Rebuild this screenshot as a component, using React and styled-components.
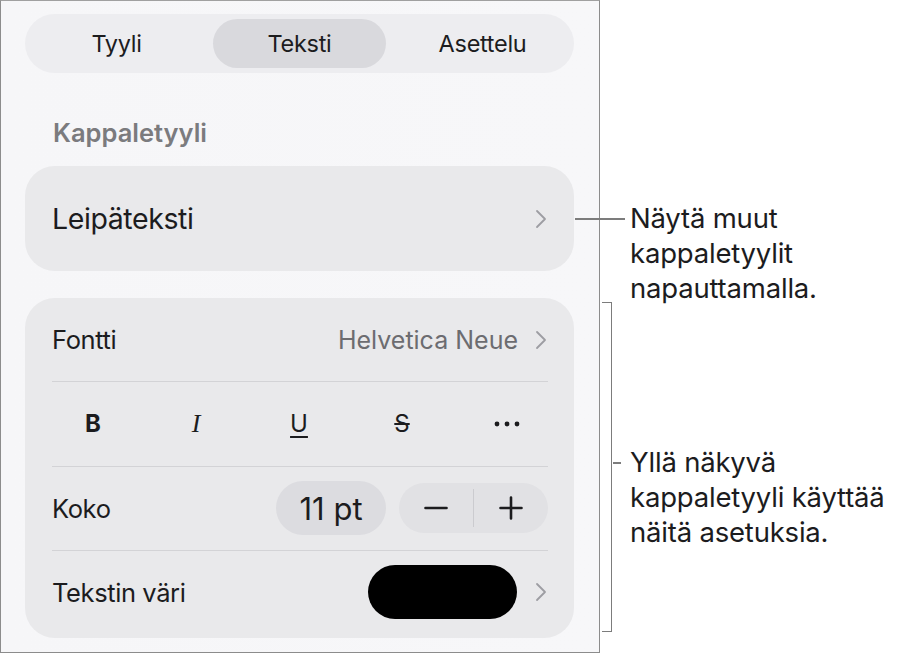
import React from 'react'
import styled, { createGlobalStyle } from 'styled-components'

const GlobalStyle = createGlobalStyle`
  html, body {
    margin: 0;
    padding: 0;
    background: #ffffff;
  }
  body {
    font-family: Inter, "Noto Sans", "Liberation Sans", sans-serif;
    color: #1c1c1e;
    -webkit-font-smoothing: antialiased;
  }
`

const Page = styled.div`
  display: flex;
  width: 902px;
  height: 654px;
  position: relative;
`

const Panel = styled.div`
  box-sizing: border-box;
  width: 600px;
  height: 653px;
  border: 1px solid #8c8c8c;
  border-top-color: #a0a0a0;
  background: linear-gradient(90deg, #f6f6f8 0%, #f7f7f9 100%);
  padding: 13px 25px 0 24px;
  display: flex;
  flex-direction: column;
`

const Segmented = styled.div`
  display: grid;
  grid-template-columns: repeat(3, 1fr);
  gap: 10px;
  height: 59px;
  box-sizing: border-box;
  padding: 5px;
  border-radius: 30px;
  background: #ededf0;
`

const Segment = styled.div`
  display: flex;
  align-items: center;
  justify-content: center;
  border-radius: 25px;
  font-size: 23.5px;
  letter-spacing: -0.3px;
  color: #1c1c1e;
  background: ${({ active }) => (active ? '#d9d9dd' : 'transparent')};
`

const SectionLabel = styled.div`
  margin: 46px 0 19px 28px;
  font-size: 25.5px;
  line-height: 28px;
  font-weight: 600;
  color: #7b7b7e;
  letter-spacing: 0;
`

const Card = styled.div`
  background: #e9e9eb;
  border-radius: 30px;
  display: flex;
  flex-direction: column;
`

const StyleCard = styled(Card)`
  height: 105px;
  flex-direction: row;
  align-items: center;
  justify-content: space-between;
  padding: 0 27px 0 27px;
`

const StyleName = styled.span`
  font-size: 28.5px;
  letter-spacing: -0.4px;
  color: #1c1c1e;
`

const FormatCard = styled(Card)`
  margin-top: 27px;
  height: 340px;
  box-sizing: border-box;
  padding: 0 26px 4px 27px;
`

const Row = styled.div`
  flex: 1;
  display: flex;
  align-items: center;
  justify-content: space-between;
  padding: ${({ spread }) => (spread ? '0 28px 0 30px' : '0')};
  border-top: ${({ first }) => (first ? 'none' : '1px solid #d3d3d6')};
`

const RowLabel = styled.span`
  font-size: 25.5px;
  letter-spacing: -0.4px;
  color: #1c1c1e;
`

const Trailing = styled.div`
  display: flex;
  align-items: center;
  gap: ${({ gap }) => gap || 0}px;
  margin-right: ${({ inset }) => inset || 0}px;
`

const Value = styled.span`
  font-size: 25px;
  letter-spacing: 0;
  color: #6c6c70;
`

const FormatButton = styled.span`
  width: 22px;
  display: flex;
  justify-content: center;
  font-size: ${({ size }) => size || 24}px;
  color: #1c1c1e;
  font-weight: ${({ bold }) => (bold ? 700 : 400)};
  font-style: ${({ italic }) => (italic ? 'italic' : 'normal')};
  font-family: ${({ serif }) =>
    serif ? '"Liberation Serif", "DejaVu Serif", serif' : 'inherit'};
  text-decoration: ${({ deco }) => deco || 'none'};
  text-decoration-thickness: 1.7px;
  text-underline-offset: 4px;
`

const SizePill = styled.div`
  width: 110px;
  height: 54px;
  border-radius: 27px;
  background: #dcdce0;
  display: flex;
  align-items: center;
  justify-content: center;
  font-size: 31px;
  letter-spacing: 0;
  color: #1c1c1e;
`

const Stepper = styled.div`
  width: 149px;
  height: 50px;
  border-radius: 25px;
  background: #e1e1e4;
  display: grid;
  grid-template-columns: 1fr 1.5px 1fr;
  align-items: center;
`

const StepButton = styled.div`
  display: flex;
  align-items: center;
  justify-content: center;
`

const StepDivider = styled.div`
  height: 38px;
  background: #cbcbcf;
`

const Swatch = styled.div`
  width: 149px;
  height: 54px;
  border-radius: 27px;
  background: ${({ color }) => color};
`

const Callout = styled.div`
  position: absolute;
  display: flex;
  align-items: flex-start;
`

const Leader = styled.div`
  width: 50px;
  height: 1.5px;
  margin-top: 17px;
  background: #7c7c7c;
`

const Bracket = styled.div`
  width: 10px;
  height: 330px;
  box-sizing: border-box;
  border: 1.5px solid #7c7c7c;
  border-left: none;
  position: relative;
  &::after {
    content: '';
    position: absolute;
    right: -9.5px;
    top: 159px;
    width: 8px;
    height: 1.5px;
    background: #7c7c7c;
  }
`

const Note = styled.div`
  font-size: 27.5px;
  line-height: 35px;
  color: #1c1c1e;
  letter-spacing: -0.2px;
  margin-left: ${({ offset }) => offset}px;
  margin-top: ${({ drop }) => drop || 0}px;
`

const Chevron = () => (
  <svg width="12" height="20" viewBox="0 0 12 20" fill="none">
    <path d="M2 2 L10 10 L2 18" stroke="#9d9da2" strokeWidth="1.8" strokeLinecap="round" strokeLinejoin="round" />
  </svg>
)

const Minus = () => (
  <svg width="24" height="24" viewBox="0 0 24 24">
    <path d="M1.5 12 H22.5" stroke="#1c1c1e" strokeWidth="2.6" strokeLinecap="round" />
  </svg>
)

const Plus = () => (
  <svg width="24" height="24" viewBox="0 0 24 24">
    <path d="M1.5 12 H22.5 M12 1.5 V22.5" stroke="#1c1c1e" strokeWidth="2.6" strokeLinecap="round" />
  </svg>
)

const More = () => (
  <svg width="26" height="6" viewBox="0 0 26 6">
    <circle cx="3" cy="3" r="2.4" fill="#1c1c1e" />
    <circle cx="13" cy="3" r="2.4" fill="#1c1c1e" />
    <circle cx="23" cy="3" r="2.4" fill="#1c1c1e" />
  </svg>
)

const App = () => {
  return (
    <>
      <GlobalStyle />
      <Page>
        <Panel>
          <Segmented>
            <Segment>Tyyli</Segment>
            <Segment active>Teksti</Segment>
            <Segment>Asettelu</Segment>
          </Segmented>

          <SectionLabel>Kappaletyyli</SectionLabel>

          <StyleCard>
            <StyleName>Leipäteksti</StyleName>
            <Chevron />
          </StyleCard>

          <FormatCard>
            <Row first>
              <RowLabel>Fontti</RowLabel>
              <Trailing gap={17} inset={1}>
                <Value>Helvetica Neue</Value>
                <Chevron />
              </Trailing>
            </Row>
            <Row spread>
              <FormatButton bold>B</FormatButton>
              <FormatButton italic serif size={26}>I</FormatButton>
              <FormatButton deco="underline">U</FormatButton>
              <FormatButton deco="line-through">S</FormatButton>
              <More />
            </Row>
            <Row>
              <RowLabel>Koko</RowLabel>
              <Trailing gap={13}>
                <SizePill>11 pt</SizePill>
                <Stepper>
                  <StepButton><Minus /></StepButton>
                  <StepDivider />
                  <StepButton><Plus /></StepButton>
                </Stepper>
              </Trailing>
            </Row>
            <Row>
              <RowLabel>Tekstin väri</RowLabel>
              <Trailing gap={18} inset={1}>
                <Swatch color="#000000" />
                <Chevron />
              </Trailing>
            </Row>
          </FormatCard>
        </Panel>

        <Callout style={{ left: 575, top: 201 }}>
          <Leader />
          <Note offset={5}>
            Näytä muut
            <br />
            kappaletyylit
            <br />
            napauttamalla.
          </Note>
        </Callout>

        <Callout style={{ left: 602, top: 302 }}>
          <Bracket />
          <Note offset={18} drop={143}>
            Yllä näkyvä
            <br />
            kappaletyyli käyttää
            <br />
            näitä asetuksia.
          </Note>
        </Callout>
      </Page>
    </>
  )
}

export default App
